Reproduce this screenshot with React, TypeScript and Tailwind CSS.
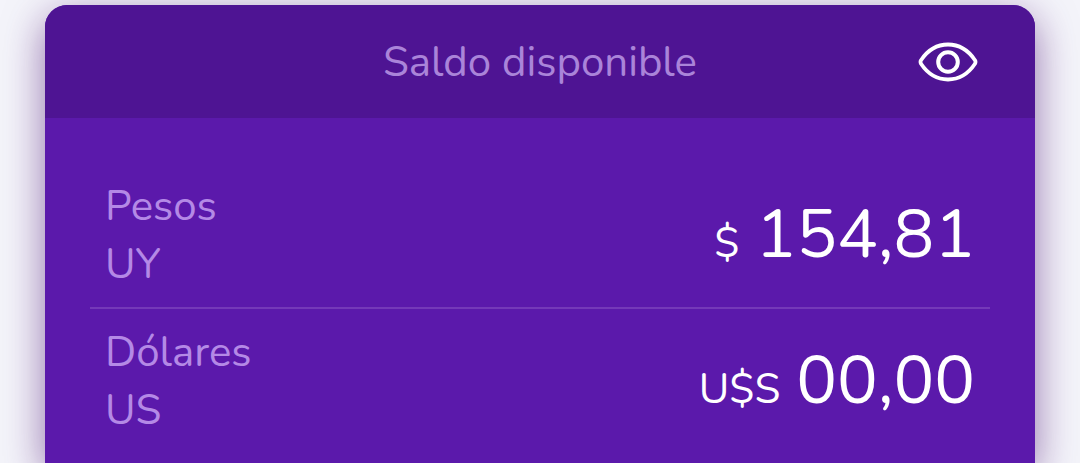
import React, { useState } from "react";

interface Balance {
  currency: string;
  country: string;
  symbol: string;
  amount: string;
}

const balances: Balance[] = [
  { currency: "Pesos", country: "UY", symbol: "$", amount: "154,81" },
  { currency: "Dólares", country: "US", symbol: "U$S", amount: "00,00" },
];

function EyeIcon() {
  return (
    <svg viewBox="0 0 60 40" fill="none" stroke="currentColor" className="w-[60px] h-10" aria-hidden="true">
      <path
        d="M3 18.2C9.5 8.5 18.5 2.5 30 2.5S50.5 8.5 57 18.2Q58 20 57 21.8C50.5 31.5 41.5 37.5 30 37.5S9.5 31.5 3 21.8Q2 20 3 18.2Z"
        strokeWidth="3.8"
        strokeLinejoin="round"
      />
      <circle cx="30" cy="20" r="9.8" strokeWidth="4" />
    </svg>
  );
}

function BalanceRow({ currency, country, symbol, amount, hidden }: Balance & { hidden: boolean }) {
  return (
    <li className="flex items-center justify-between px-[15px] pt-[15px] pb-[13px]">
      <div className="text-[42px] leading-[58px] text-[#b489e6]">
        <p>{currency}</p>
        <p>{country}</p>
      </div>
      <p className="flex items-baseline gap-4 pb-[2px] text-white">
        <span className="text-[42px]">{symbol}</span>
        <span className="text-[68px] leading-[82px]">{hidden ? "••••" : amount}</span>
      </p>
    </li>
  );
}

export default function App() {
  const [hidden, setHidden] = useState(false);

  return (
    <main className="flex flex-col min-h-screen bg-[#f4f4fa] px-[45px] pt-[5px] font-['Nunito',Lato,sans-serif]">
      <section className="flex-1 rounded-t-[22px] bg-[#5b19ab] shadow-[0_12px_40px_rgba(70,10,110,0.56)]">
        <header className="grid grid-cols-[60px_1fr_60px] items-center h-[113px] px-[57px] rounded-t-[22px] bg-[#4e1493]">
          <h1 className="col-start-2 pt-[2px] text-center text-[42px] leading-[58px] text-[#aa84d9]">
            Saldo disponible
          </h1>
          <button
            type="button"
            aria-label="Mostrar u ocultar saldo"
            onClick={() => setHidden(!hidden)}
            className="text-white"
          >
            <EyeIcon />
          </button>
        </header>
        <ul className="px-[45px] pt-[45px] divide-y-2 divide-[#7439b8]">
          {balances.map((balance) => (
            <BalanceRow key={balance.currency} {...balance} hidden={hidden} />
          ))}
        </ul>
      </section>
    </main>
  );
}
